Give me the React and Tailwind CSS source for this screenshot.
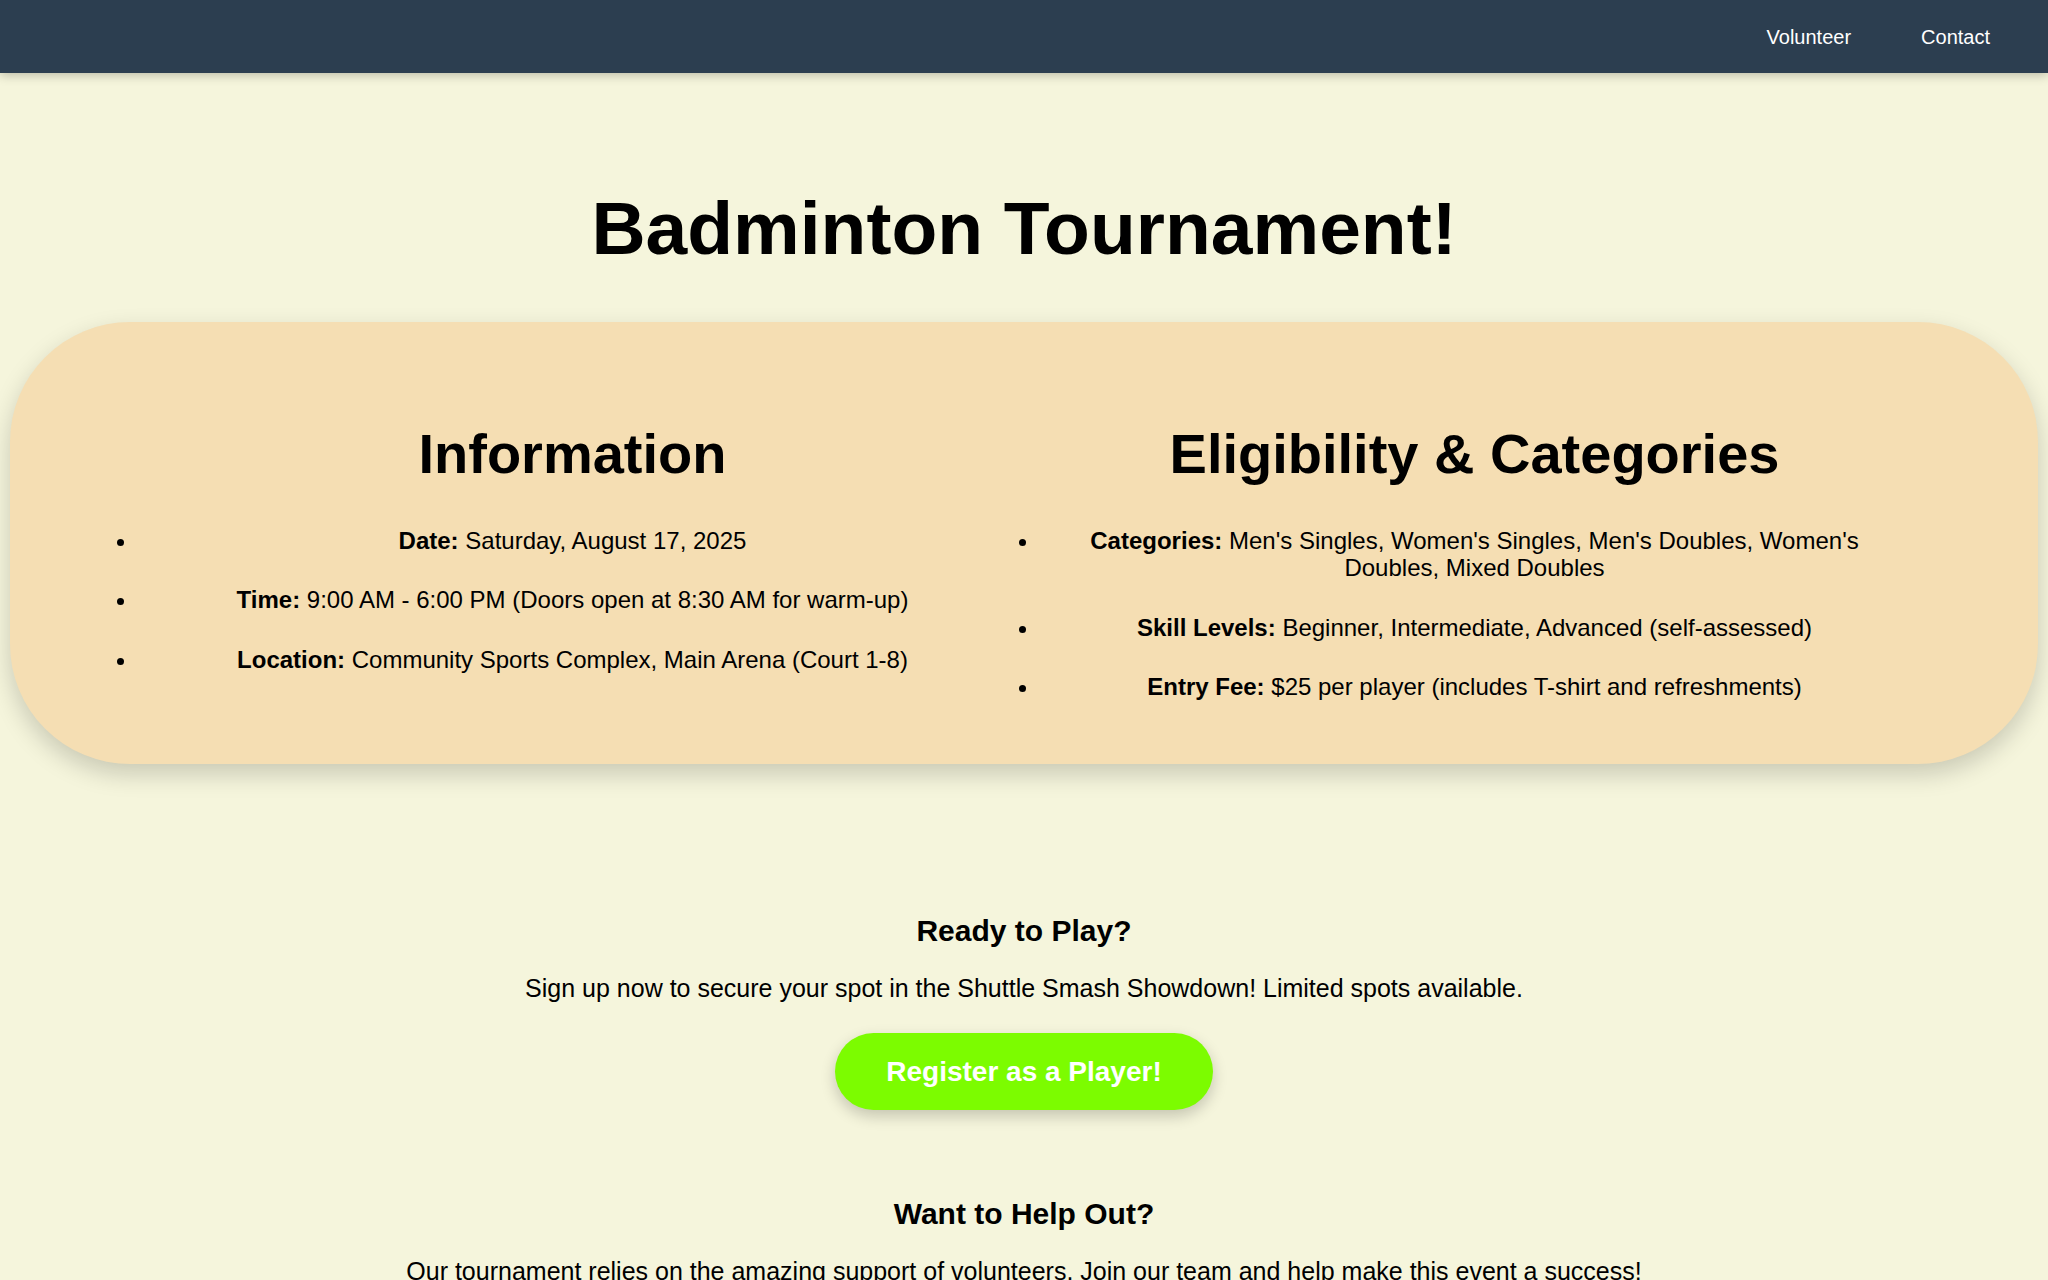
import React from 'react';

const infoItems = [
  { label: 'Date:', text: 'Saturday, August 17, 2025' },
  { label: 'Time:', text: '9:00 AM - 6:00 PM (Doors open at 8:30 AM for warm-up)' },
  { label: 'Location:', text: 'Community Sports Complex, Main Arena (Court 1-8)' },
];

const eligibilityItems = [
  { label: 'Categories:', text: "Men's Singles, Women's Singles, Men's Doubles, Women's Doubles, Mixed Doubles" },
  { label: 'Skill Levels:', text: 'Beginner, Intermediate, Advanced (self-assessed)' },
  { label: 'Entry Fee:', text: '$25 per player (includes T-shirt and refreshments)' },
];

function InfoColumn({ title, items }) {
  return (
    <div className="w-[869px]">
      <h2 className="text-center text-[56px] font-bold leading-[1.15]">{title}</h2>
      <ul className="list-disc mt-[40px] text-[24px] leading-[1.15]">
        {items.map((item) => (
          <li key={item.label} className="text-center mb-[32px]">
            <strong className="font-bold">{item.label}</strong> {item.text}
          </li>
        ))}
      </ul>
    </div>
  );
}

export default function App() {
  return (
    <div className="min-h-screen bg-[#f5f5dc] text-black font-['Liberation_Sans',Arial,sans-serif]">
      {/* Top bar */}
      <nav className="relative z-10 h-[73px] bg-[#2c3e50] flex items-center justify-end gap-[70px] pr-[58px] shadow-[0_2px_10px_rgba(0,0,0,0.25)]">
        <a href="#volunteer" className="text-white text-[20px]">Volunteer</a>
        <a href="#contact" className="text-white text-[20px]">Contact</a>
      </nav>

      <main>
        <h1 className="mt-[112px] text-center text-[75px] font-bold leading-[1.15]">
          Badminton Tournament!
        </h1>

        {/* Details card */}
        <section className="mx-[10px] mt-[51px] rounded-[120px] bg-[#f5deb3] pt-[100px] pb-[31px] pl-[128px] flex items-start gap-[33px] shadow-[0_10px_25px_rgba(0,0,0,0.18)]">
          <InfoColumn title="Information" items={infoItems} />
          <InfoColumn title="Eligibility & Categories" items={eligibilityItems} />
        </section>

        {/* Register */}
        <section className="mt-[150px] text-center">
          <h3 className="text-[30px] font-bold leading-[1.15]">Ready to Play?</h3>
          <p className="mt-[25px] text-[25px] leading-[1.15]">
            Sign up now to secure your spot in the Shuttle Smash Showdown! Limited spots available.
          </p>
          <button
            type="button"
            className="mt-[31px] inline-flex h-[77px] items-center rounded-full bg-[#7cfc00] px-[51px] text-[28px] font-bold text-white shadow-[0_6px_15px_rgba(0,0,0,0.2)]"
          >
            Register as a Player!
          </button>
        </section>

        {/* Volunteer */}
        <section id="volunteer" className="mt-[87px] text-center">
          <h3 className="text-[30px] font-bold leading-[1.15]">Want to Help Out?</h3>
          <p className="mt-[25px] text-[25px] leading-[1.15]">
            Our tournament relies on the amazing support of volunteers. Join our team and help make this event a success!
          </p>
          <button
            type="button"
            className="mt-[31px] inline-flex h-[77px] items-center rounded-full bg-[#7cfc00] px-[51px] text-[28px] font-bold text-white shadow-[0_6px_15px_rgba(0,0,0,0.2)]"
          >
            Become a Volunteer!
          </button>
        </section>
      </main>

      <footer id="contact" className="mt-[120px] bg-[#2c3e50] py-[30px] text-center text-[18px] text-white">
        Questions? Contact us at info@shuttlesmash.com
      </footer>
    </div>
  );
}
